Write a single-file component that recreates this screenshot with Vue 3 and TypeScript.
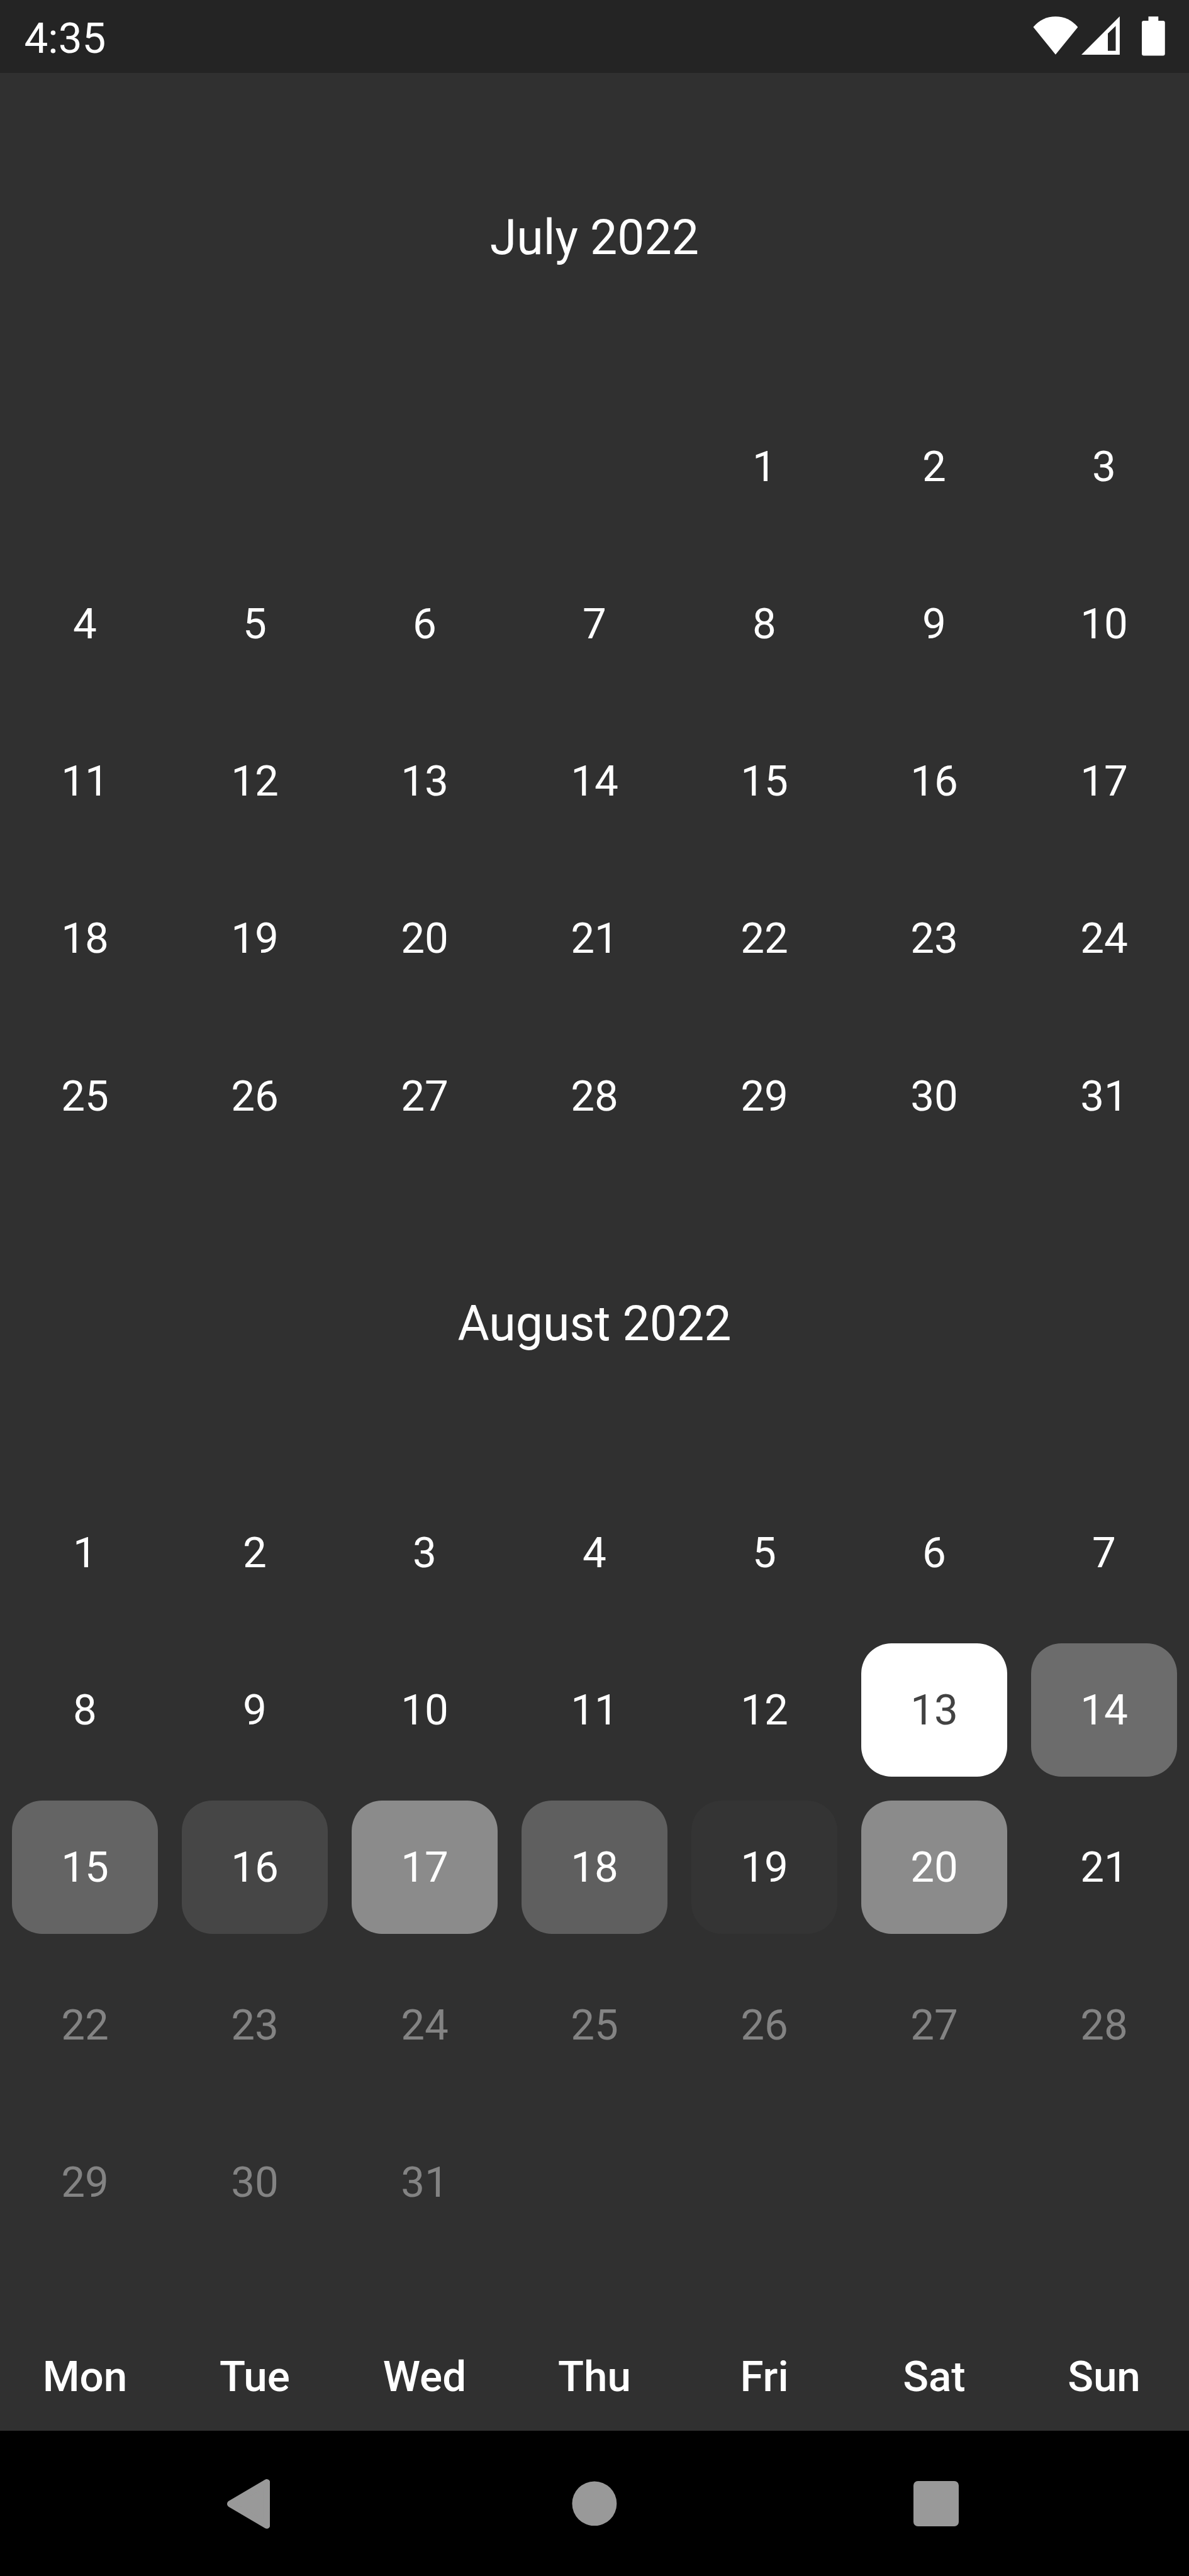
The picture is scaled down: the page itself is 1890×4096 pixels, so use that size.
<script setup lang="ts">
interface Cell {
  day: number | null
  fill?: string
  state?: 'selected' | 'future'
}

interface Month {
  title: string
  cells: Cell[]
}

const weekdays: string[] = ['Mon', 'Tue', 'Wed', 'Thu', 'Fri', 'Sat', 'Sun']

const fills: Record<number, string> = {
  13: '#ffffff',
  14: '#6c6c6c',
  15: '#646464',
  16: '#464646',
  17: '#8b8b8b',
  18: '#5f5f5f',
  19: '#343434',
  20: '#8b8b8b',
}

function blanks(count: number): Cell[] {
  return Array.from({ length: count }, () => ({ day: null }))
}

function days(make: (day: number) => Cell): Cell[] {
  return Array.from({ length: 31 }, (_, i) => make(i + 1))
}

const months: Month[] = [
  { title: 'July 2022', cells: [...blanks(4), ...days((day) => ({ day }))] },
  {
    title: 'August 2022',
    cells: [
      ...days((day) => ({
        day,
        fill: fills[day],
        state: day === 13 ? 'selected' : day > 21 ? 'future' : undefined,
      })),
      ...blanks(4),
    ],
  },
]
</script>

<template>
  <div class="screen">
    <header class="status">
      <span class="clock">4:35</span>
      <div class="indicators">
        <svg class="wifi" viewBox="0 0 82 70">
          <path d="M0.5 19.5Q17 0.3 41 0.3T81.5 19.5L41 69.5Z" />
        </svg>
        <svg class="signal" viewBox="0 0 70 70">
          <path fill-rule="evenodd" d="M0 69.6L69.6 0V69.6ZM48 31V62.5H62.3V17.3Z" />
        </svg>
        <svg class="battery" viewBox="0 0 42 72">
          <path d="M12 0.4H30V8H38.5Q42 8 42 11.5V68Q42 71.5 38.5 71.5H3.5Q0 71.5 0 68V11.5Q0 8 3.5 8H12Z" />
        </svg>
      </div>
    </header>

    <main class="calendar">
      <section v-for="month in months" :key="month.title">
        <h2 class="title">{{ month.title }}</h2>
        <div class="grid">
          <div v-for="(cell, i) in month.cells" :key="i" class="cell">
            <div class="day" :class="cell.state" :style="{ background: cell.fill }">{{ cell.day }}</div>
          </div>
        </div>
      </section>
    </main>

    <div class="weekdays">
      <span v-for="name in weekdays" :key="name">{{ name }}</span>
    </div>

    <nav class="navbar">
      <svg class="back" viewBox="0 0 78 90">
        <path d="M6 45L72 6V84Z" stroke="#999" stroke-width="12" stroke-linejoin="round" />
      </svg>
      <svg class="home" viewBox="0 0 82 82"><circle cx="41" cy="41" r="40.5" /></svg>
      <svg class="recent" viewBox="0 0 83 83"><rect width="82.3" height="82.3" rx="8" /></svg>
    </nav>
  </div>
</template>

<style>
body {
  margin: 0;
  background: #303030;
}
</style>

<style scoped>
.screen {
  display: flex;
  flex-direction: column;
  width: 1890px;
  height: 4096px;
  overflow: hidden;
  background: #303030;
  color: #fff;
  font-family: Roboto, sans-serif;
  font-size: 67.375px;
}

.status {
  display: flex;
  justify-content: space-between;
  box-sizing: border-box;
  height: 115.5px;
  padding: 0 38.5px;
  background: #242424;
  fill: #fff;
}

.clock {
  line-height: 122.5px;
}

.indicators {
  display: flex;
  align-items: flex-start;
  padding-top: 26.25px;
}

.indicators svg {
  display: block;
}

.wifi {
  width: 71.75px;
  height: 61.25px;
  margin-right: 5.25px;
}

.signal {
  width: 61.25px;
  height: 61.25px;
  margin-right: 35px;
}

.battery {
  width: 36.75px;
  height: 63px;
}

.calendar {
  flex: 1;
  min-height: 0;
  padding-top: 24.5px;
}

.title {
  margin: 0;
  height: 476px;
  line-height: 476px;
  font-size: 77px;
  font-weight: 400;
  text-align: center;
}

.grid {
  display: grid;
  grid-template-columns: repeat(7, 1fr);
  grid-auto-rows: 250.25px;
}

.cell {
  display: flex;
  padding: 19.25px;
}

.day {
  display: flex;
  flex: 1;
  align-items: center;
  justify-content: center;
  border-radius: 48px;
}

.selected {
  color: #424242;
}

.future {
  color: #838383;
}

.weekdays {
  display: grid;
  grid-template-columns: repeat(7, 1fr);
  height: 172px;
  line-height: 172px;
  font-weight: 500;
  text-align: center;
}

.navbar {
  display: flex;
  align-items: center;
  height: 231px;
  background: #000;
  fill: #999;
}

.back {
  width: 68.25px;
  height: 78.75px;
  margin-top: 1.75px;
  margin-left: 360.5px;
}

.home {
  width: 71.75px;
  height: 71.75px;
  margin-left: 480.4px;
}

.recent {
  width: 72.6px;
  height: 72.6px;
  margin-top: 2px;
  margin-left: 471.6px;
}
</style>
